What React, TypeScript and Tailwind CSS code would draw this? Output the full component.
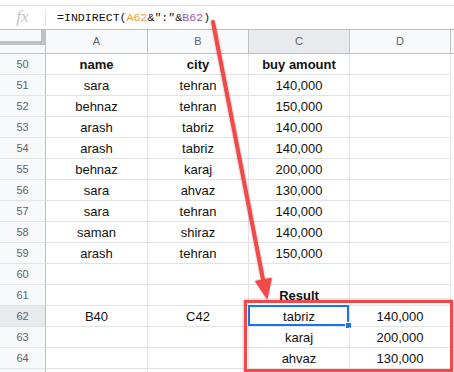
import React from 'react';

type Row = { n: number; a?: string; b?: string; c?: string; d?: string; bold?: boolean };

const rows: Row[] = [
  { n: 50, a: 'name', b: 'city', c: 'buy amount', bold: true },
  { n: 51, a: 'sara', b: 'tehran', c: '140,000' },
  { n: 52, a: 'behnaz', b: 'tehran', c: '150,000' },
  { n: 53, a: 'arash', b: 'tabriz', c: '140,000' },
  { n: 54, a: 'arash', b: 'tabriz', c: '140,000' },
  { n: 55, a: 'behnaz', b: 'karaj', c: '200,000' },
  { n: 56, a: 'sara', b: 'ahvaz', c: '130,000' },
  { n: 57, a: 'sara', b: 'tehran', c: '140,000' },
  { n: 58, a: 'saman', b: 'shiraz', c: '140,000' },
  { n: 59, a: 'arash', b: 'tehran', c: '150,000' },
  { n: 60 },
  { n: 61 },
  { n: 62, a: 'B40', b: 'C42', c: 'tabriz', d: '140,000' },
  { n: 63, c: 'karaj', d: '200,000' },
  { n: 64, c: 'ahvaz', d: '130,000' },
  { n: 65 },
];

const cell = 'flex items-center justify-center pt-px border-r border-b border-[#e2e3e3] h-[21px]';

function GridRow({ row }: { row: Row }) {
  const active = row.n === 62;
  const txt = row.bold ? 'font-bold' : '';
  return (
    <div className="flex">
      <div
        className={`w-[46px] h-[21px] flex items-center justify-center text-[11px] text-[#5f6368] border-r border-b border-r-[#c0c0c0] border-b-[#e2e3e3] ${
          active ? 'bg-[#e8eaed]' : 'bg-[#f8f9fa]'
        }`}
      >
        {/* last row is cut by the screenshot edge */}
        {row.n < 65 ? row.n : null}
      </div>
      <div className={`w-[102px] ${cell} ${txt}`}>{row.a}</div>
      <div className={`w-[101px] ${cell} ${txt}`}>{row.b}</div>
      <div className={`w-[101px] ${cell} ${txt} relative`}>
        {row.n === 61 ? <span className="font-bold">Result</span> : row.c}
        {active && (
          <>
            <div className="absolute -left-px -top-px right-0 bottom-0 border-2 border-[#1a73e8]" />
            <div className="absolute -right-[3px] -bottom-[3px] w-[7px] h-[7px] bg-[#1a73e8] border border-white" />
          </>
        )}
      </div>
      <div className={`w-[101px] ${cell}`}>{row.d}</div>
    </div>
  );
}

export default function App() {
  return (
    <div className="relative w-[454px] h-[372px] overflow-hidden bg-white text-[13px] text-[#111] font-['Liberation_Sans',Arial,sans-serif]">
      {/* formula bar */}
      <div className="mt-[5px] h-[24px] border-t border-[#e0e0e0] flex items-center">
        <div className="w-[45px] flex justify-center text-[#c5c5c5] italic text-[17px] font-['Liberation_Serif',serif] -mt-px">
          fx
        </div>
        <div className="w-px h-[16px] bg-[#e0e0e0]" />
        <div className="pl-[11px] font-['Liberation_Mono',monospace] text-[11.6px] text-[#111] whitespace-pre">
          =INDIRECT(<span className="text-[#f29b38]">A62</span>&amp;":"&amp;<span className="text-[#9b59b6]">B62</span>)
        </div>
      </div>

      {/* column headers */}
      <div className="flex h-[25px] border-t border-b border-[#c0c0c0] text-[11px] text-[#5f6368]">
        <div className="w-[46px] flex flex-col border-r border-[#c0c0c0]">
          <div className="h-[15px] bg-[#f8f9fa] border-r-4 border-b-4 border-[#c0c0c0]" />
          <div className="flex-1 bg-[#f8f9fa]" />
        </div>
        <div className="w-[102px] flex items-center justify-center bg-[#f8f9fa] border-r border-[#c0c0c0]">A</div>
        <div className="w-[101px] flex items-center justify-center bg-[#f8f9fa] border-r border-[#c0c0c0]">B</div>
        <div className="w-[101px] flex items-center justify-center bg-[#e8eaed] border-r border-[#c0c0c0]">C</div>
        <div className="w-[101px] flex items-center justify-center bg-[#f8f9fa] border-r border-[#c0c0c0]">D</div>
        <div className="flex-1 bg-[#f8f9fa]" />
      </div>

      {rows.map((r) => (
        <GridRow key={r.n} row={r} />
      ))}

      {/* annotation: red box */}
      <div className="absolute left-[244px] top-[300px] w-[209px] h-[72px] border-[3px] border-[#f24848] shadow-[0_0_3px_rgba(0,0,0,0.35)]" />

      {/* annotation: arrow */}
      <svg className="absolute inset-0 pointer-events-none" width="454" height="372">
        <defs>
          <filter id="sh" x="-20%" y="-20%" width="140%" height="140%">
            <feDropShadow dx="0" dy="0" stdDeviation="1.2" floodColor="#000" floodOpacity="0.35" />
          </filter>
        </defs>
        <g filter="url(#sh)" fill="#f24848" stroke="#f24848">
          <line x1="213" y1="22" x2="263.5" y2="282" strokeWidth="4" strokeLinecap="round" />
          <polygon points="267,298 271,278.5 256,281.5" strokeWidth="1.5" strokeLinejoin="round" />
        </g>
      </svg>
    </div>
  );
}
